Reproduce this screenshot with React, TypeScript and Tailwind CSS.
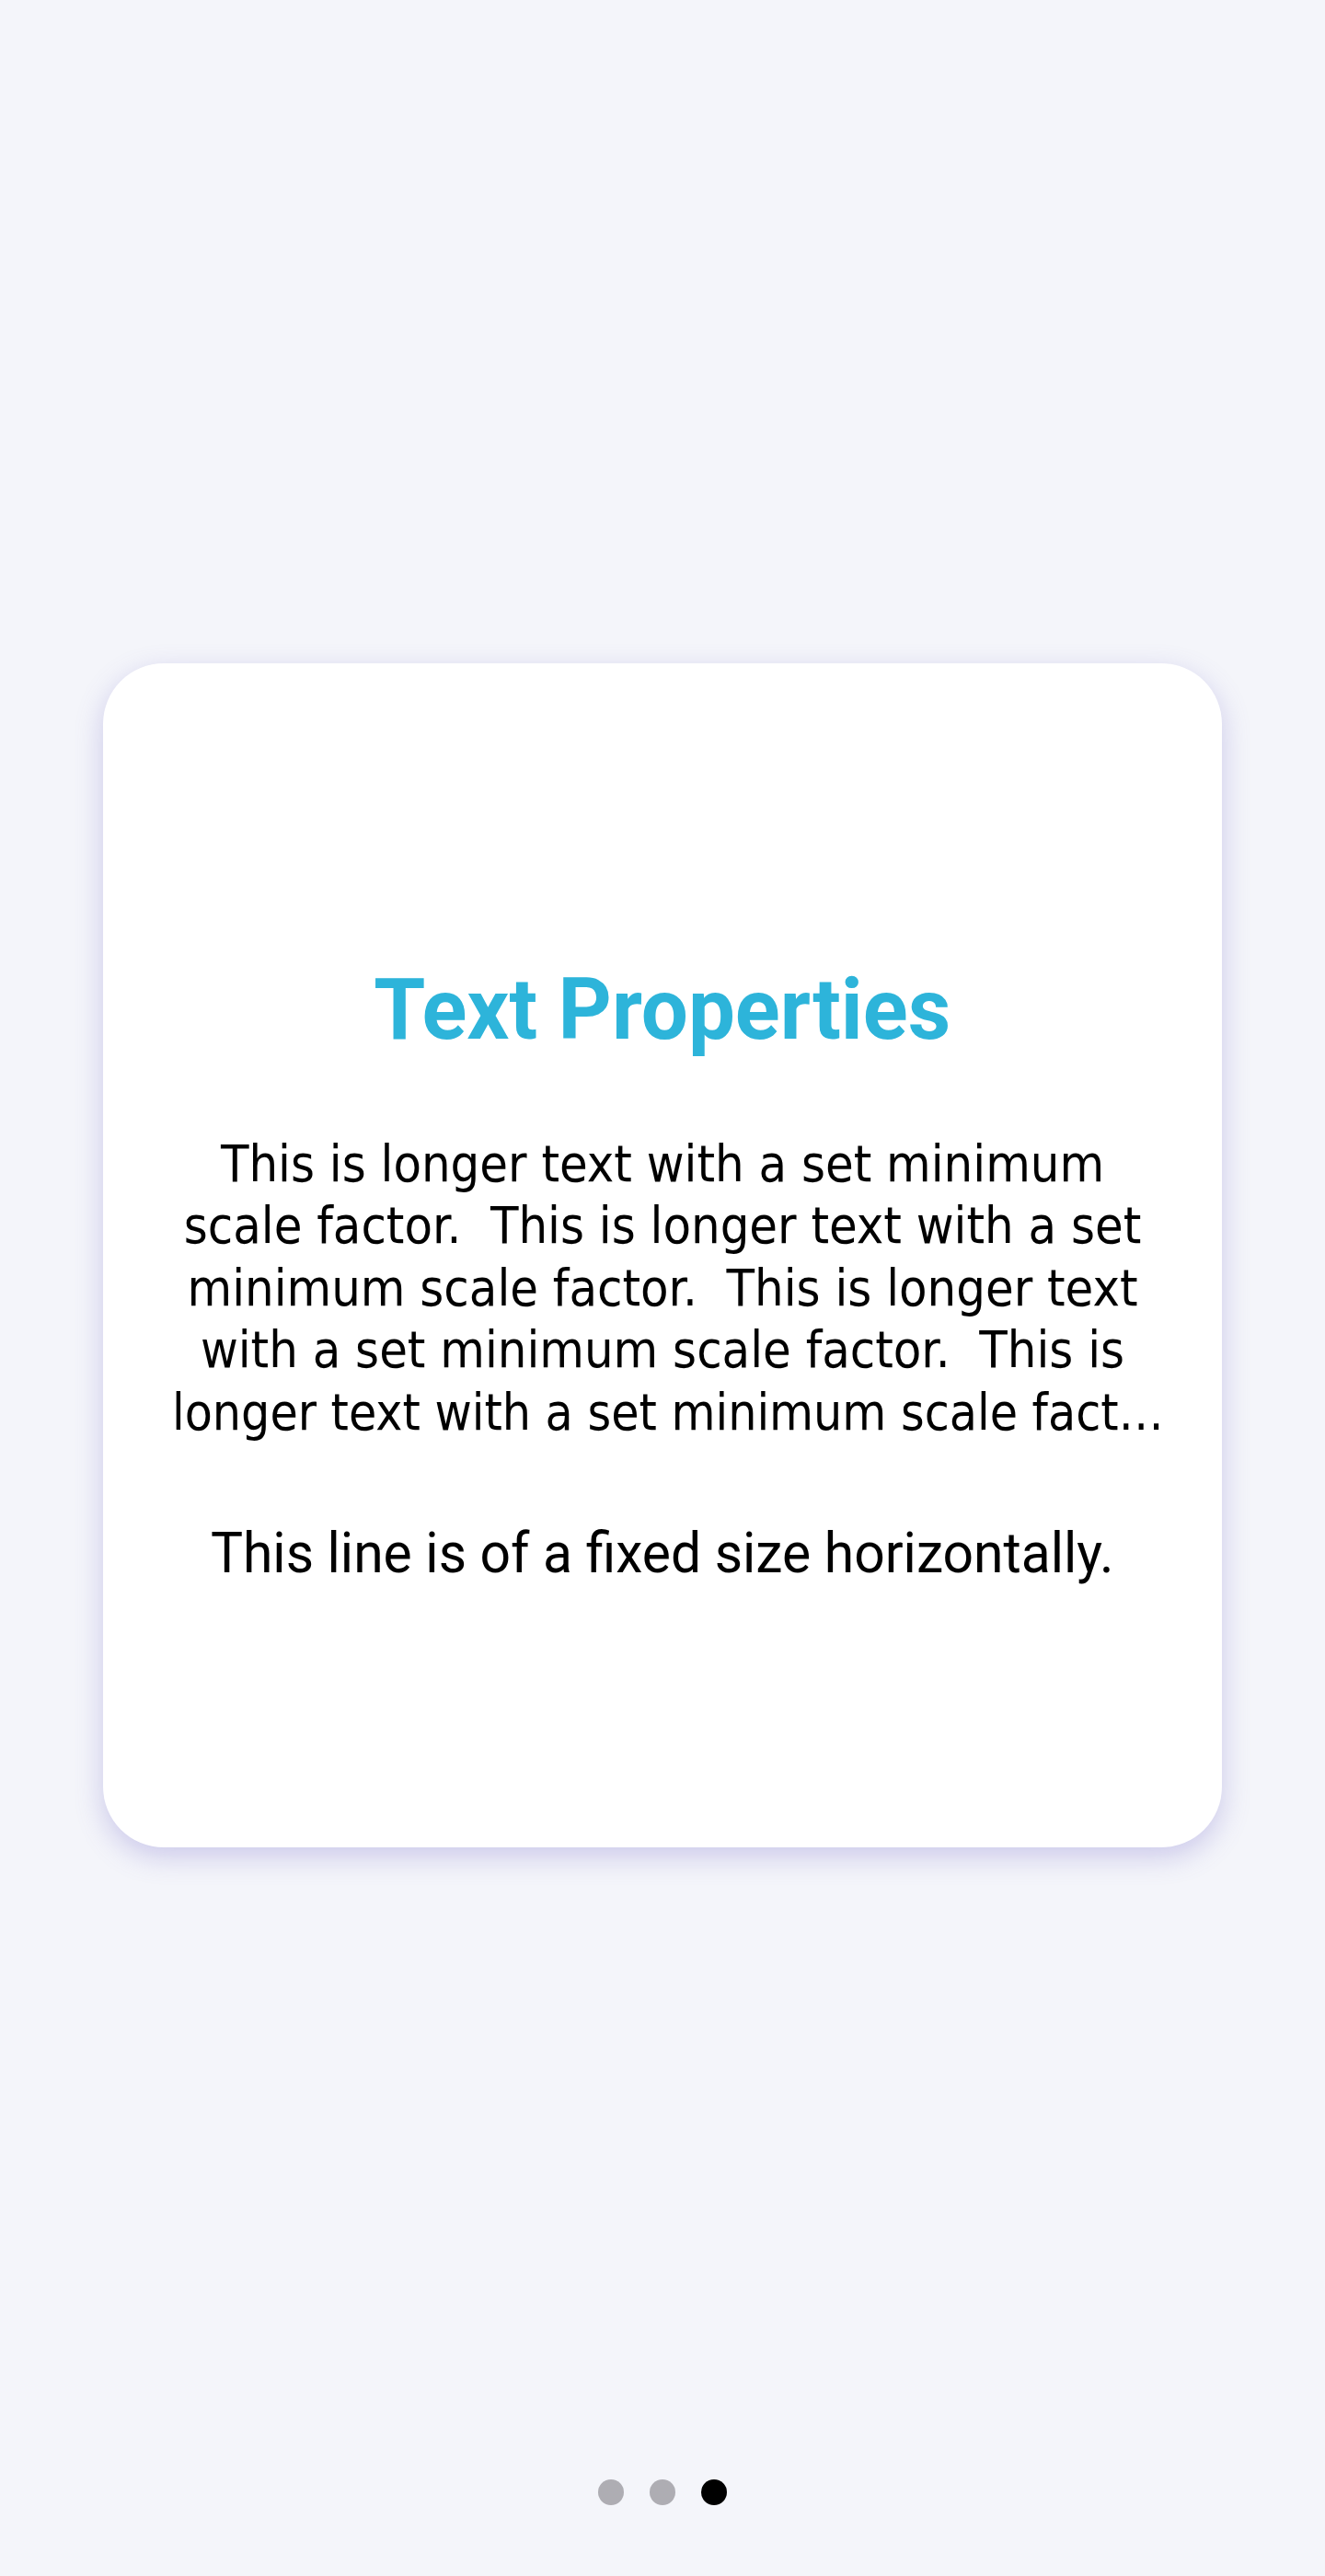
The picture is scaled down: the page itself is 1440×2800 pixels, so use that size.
export default function App() {
  const sentence = 'This is longer text with a set minimum scale factor.'
  const lead = [sentence, sentence, sentence].join('  ') + '  This is'

  return (
    <main className="flex h-[2800px] w-full flex-col bg-[#f4f5fa]">
      {/* Card */}
      <div className="px-[112px] pt-[721px]">
        <div className="flex h-[1287px] flex-col items-center rounded-[66px] bg-white px-[68px] pt-[330px] shadow-[0_10px_30px_rgba(110,100,200,0.3)]">
          <h1 className="origin-center scale-x-[0.974] font-['Roboto',sans-serif] text-[93px] font-bold leading-none text-[#2db4da]">
            Text Properties
          </h1>
          <div className="mt-[87px] w-full text-center font-['DejaVu_Sans',sans-serif] text-[55.5px] leading-[67.4px] text-black [font-stretch:condensed]">
            <p className="whitespace-pre-wrap">{lead}</p>
            <p className="origin-center scale-x-[0.987] whitespace-nowrap">longer text with a set minimum scale fact…</p>
          </div>
          <p className="mt-[89px] origin-center scale-x-[0.948] whitespace-nowrap font-['Roboto',sans-serif] text-[62px] leading-none text-black">
            This line is of a fixed size horizontally.
          </p>
        </div>
      </div>

      {/* Page dots */}
      <div className="mt-auto flex items-center justify-center gap-[28px] pb-[77px]">
        <span className="h-[28px] w-[28px] rounded-full bg-[#aeadb3]" />
        <span className="h-[28px] w-[28px] rounded-full bg-[#aeadb3]" />
        <span className="h-[28px] w-[28px] rounded-full bg-black" />
      </div>
    </main>
  )
}
